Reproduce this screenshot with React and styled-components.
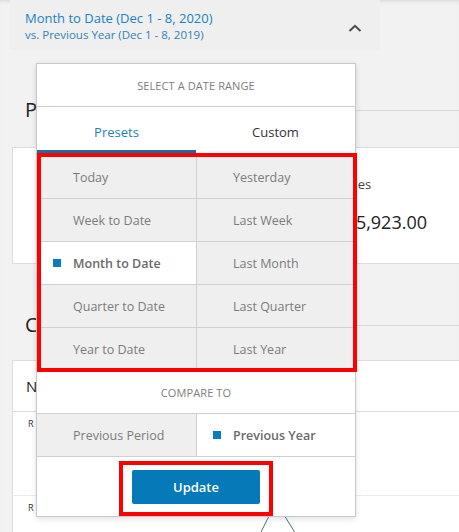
import React from "react";
import styled, { createGlobalStyle } from "styled-components";

const GlobalStyle = createGlobalStyle`
    html, body {
        margin: 0;
        padding: 0;
        background: #f2f2f2;
        font-family: "Open Sans", "Noto Sans", sans-serif;
        overflow: hidden;
    }
    * { box-sizing: border-box; }
`

const Page = styled.div`
    position: relative;
    width: 459px;
    height: 532px;
    overflow: hidden;
    box-shadow: inset 0 4px 4px -3px rgba(0, 0, 0, 0.12);
`

const Header = styled.div`
    margin-left: 10px;
    width: 370px;
    height: 50px;
    padding: 9px 0 0 15px;
    background: #efefef;
    display: flex;
    align-items: flex-start;
    justify-content: space-between;
`

const RangeTitle = styled.div`
    font-size: 13px;
    line-height: 18px;
    color: #1a82c4;
`

const RangeSub = styled.div`
    font-size: 11.5px;
    line-height: 16px;
    color: #3182bd;
`

const Chevron = styled.svg`
    width: 14px;
    height: 8px;
    margin: 15px 18px 0 0;
`

const SectionHead = styled.div`
    display: flex;
    align-items: center;
    height: 28px;
    margin-top: ${(p) => p.$top}px;
    padding-left: 25px;
`

const SectionTitle = styled.div`
    font-size: 20px;
    line-height: 28px;
    color: #222;
`

const HeadRule = styled.div`
    flex: 1;
    margin-left: 180px;
    border-top: 1px solid #d8d8d8;
`

const StatsCard = styled.div`
    margin: 23px 0 0 12px;
    height: 117px;
    background: #fff;
    border: 1px solid #dcdcdc;
    border-right: none;
    display: grid;
    grid-template-columns: 286px 1fr;
`

const Stat = styled.div`
    grid-column: 2;
    padding-top: 27px;
`

const StatLabel = styled.div`
    font-size: 13px;
    line-height: 18px;
    color: #444;
    padding-left: 16px;
`

const StatValue = styled.div`
    margin: 17px 0 0 26px;
    font-size: 18px;
    line-height: 24px;
    color: #222;
`

const ChartCard = styled.div`
    margin: 21px 0 0 12px;
    background: #fff;
    border: 1px solid #dcdcdc;
    border-right: none;
    height: 200px;
`

const ChartTitle = styled.div`
    height: 51px;
    padding: 15px 0 0 13px;
    font-size: 15px;
    line-height: 20px;
    color: #222;
    border-bottom: 1px solid #dcdcdc;
`

const ChartRow = styled.div`
    height: ${(p) => p.$h}px;
    padding: 6px 0 0 15px;
    border-bottom: 1px solid ${(p) => (p.$last ? "transparent" : "#ececec")};
`

const ChartLabel = styled.div`
    font-size: 9px;
    line-height: 12px;
    color: #333;
`

const ChartLine = styled.svg`
    display: block;
    margin-left: -15px;
    width: 447px;
    height: 30px;
`

/* date range dropdown */

const Popover = styled.div`
    position: absolute;
    left: 36px;
    top: 63px;
    width: 320px;
    background: #fff;
    border: 1px solid #c8c8c8;
    box-shadow: 0 2px 6px rgba(0, 0, 0, 0.12);
`

const Caption = styled.div`
    height: ${(p) => p.$h}px;
    display: flex;
    align-items: center;
    justify-content: center;
    font-size: 11px;
    letter-spacing: 0.1px;
    text-transform: uppercase;
    color: #7d7d7d;
    border-bottom: 1px solid #cfcfcf;
`

const Tabs = styled.div`
    display: grid;
    grid-template-columns: 159px 1fr;
    height: 46px;
`

const Tab = styled.div`
    display: flex;
    align-items: center;
    justify-content: center;
    padding-top: 6px;
    font-size: 13px;
    color: ${(p) => (p.$active ? "#1a7fc0" : "#333")};
    border-bottom: 3px solid ${(p) => (p.$active ? "#1f6aa3" : "transparent")};
`

const Highlight = styled.div`
    position: relative;
`

const RedBox = styled.div`
    position: absolute;
    top: 0;
    left: 0;
    right: -2px;
    bottom: -1px;
    border: 4px solid #ff0000;
    pointer-events: none;
`

const OptionGrid = styled.div`
    display: grid;
    grid-template-columns: 159px 1fr;
    grid-auto-rows: 42px;
    gap: 1px;
    background: #d0d0d0;
    border-top: ${(p) => p.$pad}px solid #efefef;
    border-bottom: 1px solid #d0d0d0;
`

const Option = styled.div`
    display: flex;
    align-items: center;
    padding-left: ${(p) => (p.$selected ? 16 : 36)}px;
    background: ${(p) => (p.$selected ? "#fff" : "#efefef")};
    font-size: 12.5px;
    font-weight: ${(p) => (p.$selected ? 600 : 400)};
    color: ${(p) => (p.$selected ? "#6a6a6a" : "#7b7b7b")};
`

const Dot = styled.span`
    width: 8px;
    height: 8px;
    margin-right: 12px;
    background: #0a7bbd;
`

const Footer = styled.div`
    height: 59px;
    display: flex;
    justify-content: center;
    padding-top: 4px;
`

const ButtonFrame = styled.div`
    padding: 5px 9px 8px;
    border: 4px solid #ff0000;
    height: 55px;
`

const UpdateButton = styled.button`
    width: 128px;
    height: 34px;
    border: none;
    border-radius: 2px;
    background: #0679b8;
    color: #fff;
    font-family: inherit;
    font-size: 13px;
    font-weight: 600;
`

const presets = [
    ["Today", "Yesterday"],
    ["Week to Date", "Last Week"],
    ["Month to Date", "Last Month"],
    ["Quarter to Date", "Last Quarter"],
    ["Year to Date", "Last Year"],
];

function OptionCell({ label, selected }) {
    return (
        <Option $selected={selected}>
            {selected && <Dot />}
            {label}
        </Option>
    );
}

function DateRangePopover() {
    return (
        <Popover>
            <Caption $h={43}>Select a date range</Caption>
            <Tabs>
                <Tab $active>Presets</Tab>
                <Tab>Custom</Tab>
            </Tabs>
            <Highlight>
                <OptionGrid $pad={3}>
                    {presets.flat().map((label) => (
                        <OptionCell key={label} label={label} selected={label === "Month to Date"} />
                    ))}
                </OptionGrid>
                <RedBox />
            </Highlight>
            <Caption $h={43}>Compare to</Caption>
            <OptionGrid $pad={0}>
                <OptionCell label="Previous Period" />
                <OptionCell label="Previous Year" selected />
            </OptionGrid>
            <Footer>
                <ButtonFrame>
                    <UpdateButton>Update</UpdateButton>
                </ButtonFrame>
            </Footer>
        </Popover>
    );
}

export default function App() {
    return (
        <>
            <GlobalStyle />
            <Page>
                <Header>
                    <div>
                        <RangeTitle>Month to Date (Dec 1 - 8, 2020)</RangeTitle>
                        <RangeSub>vs. Previous Year (Dec 1 - 8, 2019)</RangeSub>
                    </div>
                    <Chevron viewBox="0 0 14 8">
                        <path d="M1.5 7 L7 1.8 L12.5 7" fill="none" stroke="#4a4a4a" strokeWidth="2" />
                    </Chevron>
                </Header>

                <SectionHead $top={46}>
                    <SectionTitle>Performance</SectionTitle>
                    <HeadRule />
                </SectionHead>
                <StatsCard>
                    <Stat>
                        <StatLabel>Net Sales</StatLabel>
                        <StatValue>$125,923.00</StatValue>
                    </Stat>
                </StatsCard>

                <SectionHead $top={47}>
                    <SectionTitle>Charts</SectionTitle>
                    <HeadRule />
                </SectionHead>
                <ChartCard>
                    <ChartTitle>Net Sales</ChartTitle>
                    <ChartRow $h={84}>
                        <ChartLabel>R</ChartLabel>
                    </ChartRow>
                    <ChartRow $h={60} $last>
                        <ChartLabel>R</ChartLabel>
                        <ChartLine viewBox="0 0 447 30">
                            <path d="M242 30 L259 -4 M268 -4 L289 30" fill="none" stroke="#4b6f8f" strokeWidth="1" />
                        </ChartLine>
                    </ChartRow>
                </ChartCard>

                <DateRangePopover />
            </Page>
        </>
    );
}
